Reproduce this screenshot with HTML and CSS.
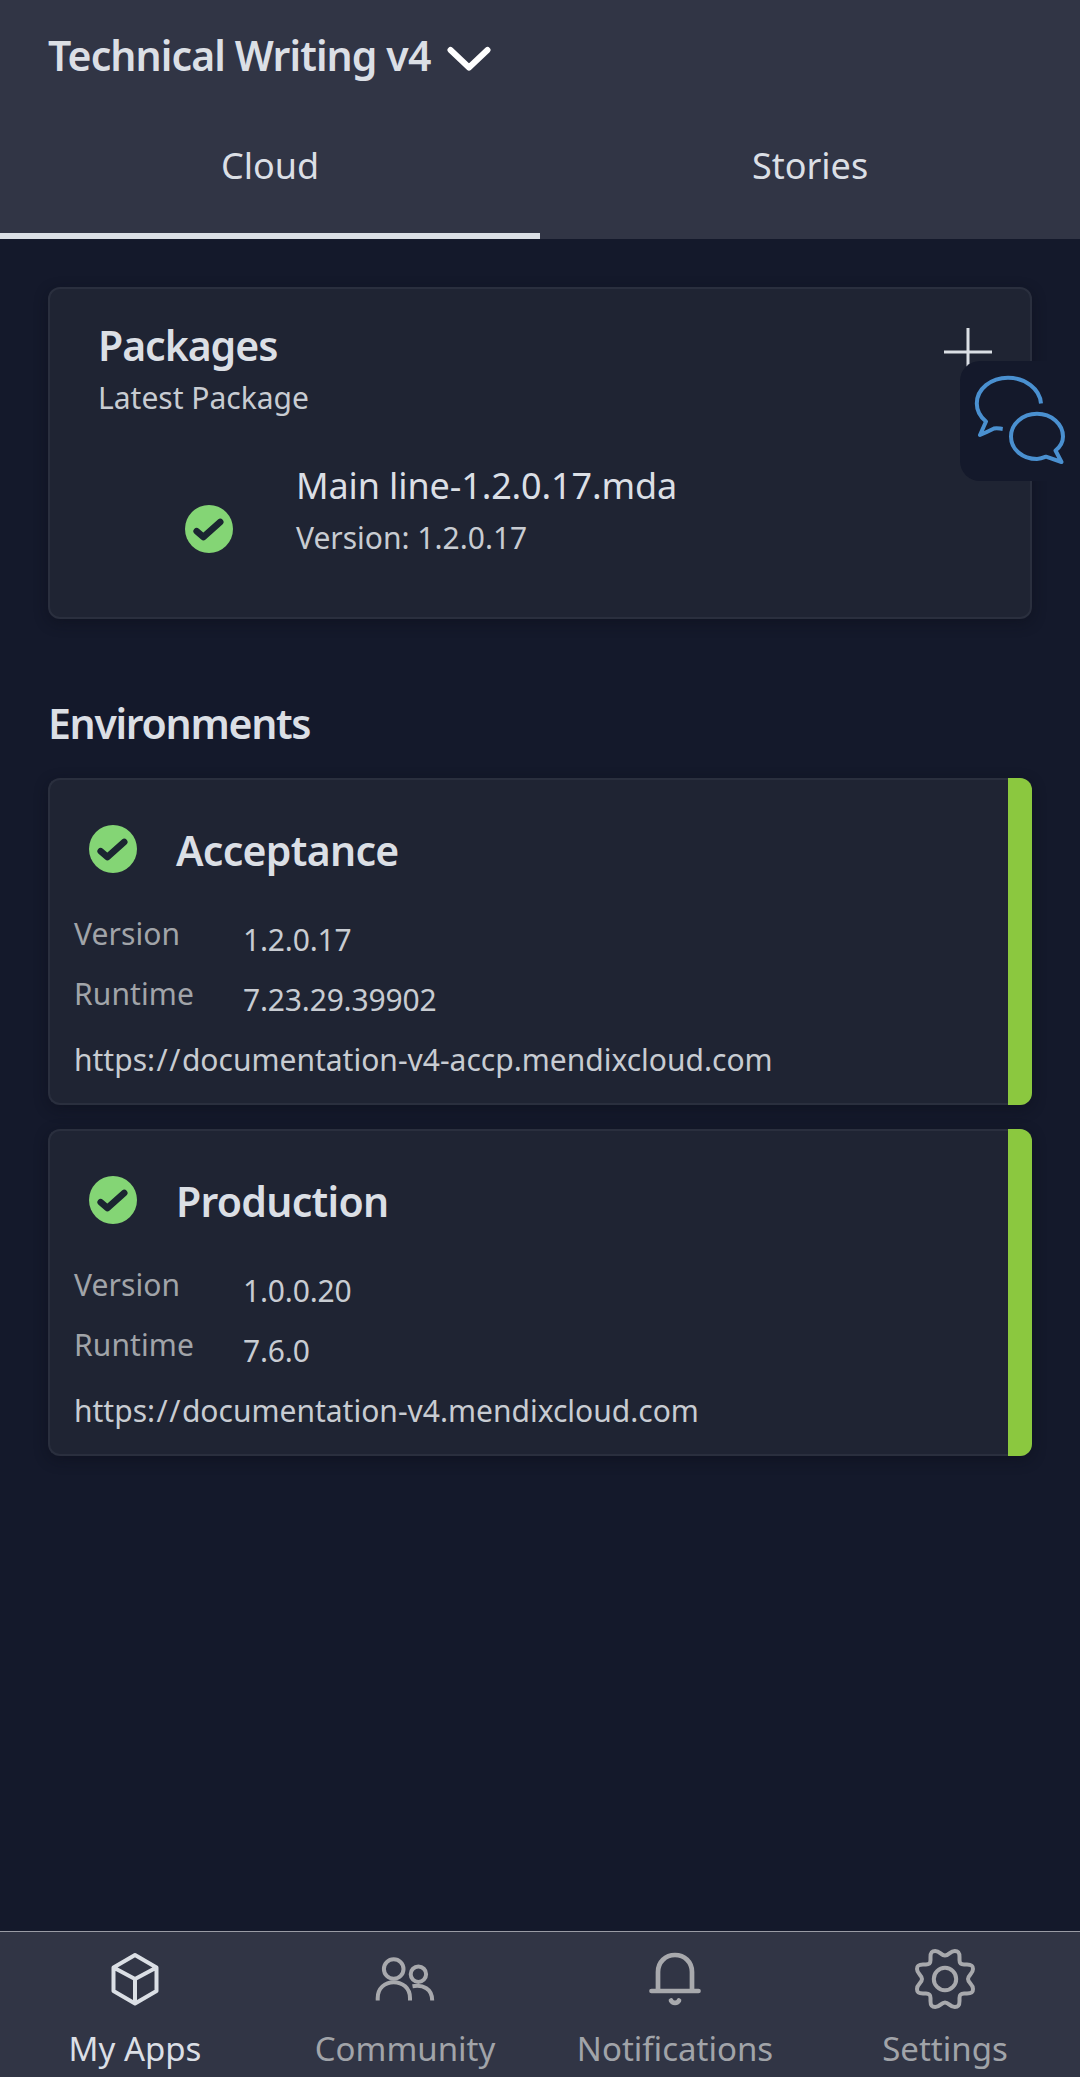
FILE: index.html
```html
<!DOCTYPE html>
<html lang="en">
<head>
<meta charset="utf-8">
<title>Technical Writing v4</title>
<link rel="stylesheet" href="styles.css">
</head>
<body>
<svg class="defs" aria-hidden="true">
  <symbol id="check" viewBox="-24 -24 48 48">
    <circle r="24" fill="#84d575"/>
    <path d="M-12.3 2.2L-5.6 8L11.2-7" fill="none" stroke="#1b2531" stroke-width="6.6" stroke-linecap="round" stroke-linejoin="round"/>
  </symbol>
</svg>
<div class="app">
  <header class="header">
    <div class="project">
      <h1 class="heading">Technical Writing v4</h1>
      <svg class="chevron" viewBox="0 0 44 26"><path d="M3.5 4L22 21.5L40.500 4"/></svg>
    </div>
    <nav class="tabs">
      <a class="tab tab-active">Cloud</a>
      <a class="tab">Stories</a>
    </nav>
  </header>

  <main class="content">
    <section class="card packages">
      <div class="packages-head">
        <div>
          <h2 class="heading">Packages</h2>
          <p class="text">Latest Package</p>
        </div>
        <svg class="plus" viewBox="0 0 48 48"><path d="M24 0V48M0 24H48"/></svg>
      </div>
      <div class="package">
        <svg class="check"><use href="#check"/></svg>
        <div>
          <p class="package-name">Main line-1.2.0.17.mda</p>
          <p class="text">Version: 1.2.0.17</p>
        </div>
      </div>
    </section>

    <h2 class="heading section-title">Environments</h2>
    <div class="environments">
      <section class="card environment">
        <div class="environment-head">
          <svg class="check"><use href="#check"/></svg>
          <h3 class="heading">Acceptance</h3>
        </div>
        <dl class="facts">
          <dt>Version</dt><dd>1.2.0.17</dd>
          <dt>Runtime</dt><dd>7.23.29.39902</dd>
        </dl>
        <p class="text">https<span class="scheme">://</span>documentation-v4-accp.mendixcloud.com</p>
      </section>
      <section class="card environment">
        <div class="environment-head">
          <svg class="check"><use href="#check"/></svg>
          <h3 class="heading">Production</h3>
        </div>
        <dl class="facts">
          <dt>Version</dt><dd>1.0.0.20</dd>
          <dt>Runtime</dt><dd>7.6.0</dd>
        </dl>
        <p class="text">https<span class="scheme">://</span>documentation-v4.mendixcloud.com</p>
      </section>
    </div>
  </main>

  <button class="chat" aria-label="Chat">
    <svg viewBox="0 0 92 90">
      <path d="M69 31.500C68 17 53 5.700 36 5.700C19 5.700 4.800 17 4.800 31.500C4.800 39 8.500 45 14 49.500L8 63C14 60.500 17 59 22 56.500C25 55.500 27 56.500 30.700 57"/>
      <path d="M65 41.700C50.500 41.700 39 52 39 64.500C39 77.500 50.500 87 65 87C68 87 71 86 74 84.700L89.500 90L83.500 78.500C88 75 91 70 91 64.500C91 52 79.500 41.700 65 41.700Z"/>
    </svg>
  </button>

  <nav class="bottom-bar">
    <a class="bar-item bar-item-active">
      <svg viewBox="-30 -30 60 60"><path d="M0-24L21.500-11.500V12L0 24.500L-21.500 12V-11.500ZM-21.500-11.500L0 0L21.500-11.500M0 0V24.500"/></svg>
      My Apps
    </a>
    <a class="bar-item">
      <svg viewBox="-30 -30 60 60"><circle cx="-11.300" cy="-10" r="9.800"/><circle cx="13.400" cy="-4.800" r="7.700"/><path d="M-27.300 21.500V19C-27.300 9-20 3.200-11.300 3.200C-2.500 3.200 5 9 5 19V21.500M7.500 7.300C18 5.500 27.200 9.500 27.200 21.500"/></svg>
      Community
    </a>
    <a class="bar-item">
      <svg viewBox="-30 -30 60 60"><path class="thick" d="M-17 12V-7C-17-17-9.500-24-0-24C9.500-24 17-17 17-7V12M-23.500 12H23.500M-4 21.500C-2.500 24.600 2.500 24.600 4 21.500"/></svg>
      Notifications
    </a>
    <a class="bar-item">
      <svg viewBox="-30 -30 60 60"><path d="M0-23.500C4-23.500 5-28 9.800-28C14-28 14.500-25.500 14.500-22V-19C14.500-15.500 16-14.500 19-14.500H22C26-14.500 28-14 28-10C28-5 23-4 23 0C23 4 28 5 28 10C28 14 26 14.500 22 14.500H19C16 14.500 14.500 15.500 14.500 19V22C14.500 25.500 14 28 9.800 28C5 28 4 23.500 0 23.500C-4 23.500-5 28-9.800 28C-14 28-14.500 25.500-14.500 22V19C-14.500 15.500-16 14.500-19 14.500H-22C-26 14.500-28 14-28 10C-28 5-23 4-23 0C-23-4-28-5-28-10C-28-14-26-14.500-22-14.500H-19C-16-14.500-14.500-15.500-14.500-19V-22C-14.500-25.500-14-28-9.800-28C-5-28-4-23.500 0-23.500Z"/><circle r="11.200"/></svg>
      Settings
    </a>
  </nav>
</div>
</body>
</html>
```
FILE: styles.css
```css
* { box-sizing: border-box; }

body {
  margin: 0;
  background: #14192b;
  color: #dbdfe5;
  font-family: "Noto Sans", sans-serif;
}

h1, h2, h3, p, dl, dd { margin: 0; }
svg { display: block; fill: none; flex: none; }
.defs { position: absolute; width: 0; height: 0; }

.app {
  position: relative;
  display: flex;
  flex-direction: column;
  height: 2077px;
}

.heading { font-size: 41px; line-height: 56px; font-weight: 600; letter-spacing: -.9px; white-space: nowrap; }
.text { font-size: 30px; line-height: 42px; color: #c8ccd2; white-space: nowrap; }
.check { width: 48px; height: 48px; }

/* Header */
.header { height: 239px; padding-top: 27px; background: #313545; }
.project { display: flex; align-items: center; gap: 17px; padding-left: 48px; }
.chevron { width: 44px; height: 26px; margin-top: 8px; stroke: #fff; stroke-width: 6; stroke-linecap: round; stroke-linejoin: round; }
.tabs { display: flex; height: 156px; }
.tab {
  flex: 1;
  padding-top: 58px;
  border-bottom: 6px solid transparent;
  font-size: 36px;
  line-height: 50px;
  text-align: center;
}
.tab-active { border-color: #dbdfe5; }

/* Cards */
.content { flex: 1; padding: 48px 48px 0; }
.card {
  position: relative;
  background: #1f2433;
  border: 2px solid #2a2f3e;
  border-radius: 12px;
  box-shadow: 0 4px 14px rgba(10, 14, 24, .45);
}
.packages { height: 332px; padding: 28px 38px 0 48px; }
.packages-head { display: flex; justify-content: space-between; }
.packages-head .heading { letter-spacing: -1.05px; }
.packages-head .text { margin-top: 4px; }
.plus { width: 48px; height: 48px; margin-top: 11px; stroke: #dbdfe5; stroke-width: 3; }
.package { display: flex; gap: 63px; padding: 42px 0 0 87px; }
.package .check { margin-top: 44px; }
.package-name { margin-bottom: 6px; font-size: 36px; line-height: 50px; letter-spacing: -.13px; }

.section-title { margin: 76px 0 27px; letter-spacing: -1.3px; }
.environments { display: flex; flex-direction: column; gap: 24px; }
.environment { height: 327px; padding: 42px 0 0 24px; border-right: 0; }
.environment::after {
  content: "";
  position: absolute;
  top: -2px;
  right: 0;
  bottom: -2px;
  width: 24px;
  border-radius: 0 12px 12px 0;
  background: #8bc83f;
}
.environment-head { display: flex; gap: 39px; padding-left: 15px; }
.environment-head .heading { letter-spacing: -.72px; }
.environment-head .check { margin-top: 3px; }
.facts {
  display: grid;
  grid-template-columns: 169px auto;
  row-gap: 18px;
  margin: 35px 0 24px;
  font-size: 30px;
  line-height: 42px;
}
.facts dt { color: #a1a4a9; letter-spacing: .1px; }
.facts dd { height: 42px; padding-top: 6px; color: #c8ccd2; letter-spacing: -.18px; }
.scheme { letter-spacing: 1.5px; }

/* Floating chat button */
.chat {
  position: absolute;
  top: 361px;
  right: 0;
  display: flex;
  align-items: flex-start;
  width: 120px;
  height: 120px;
  padding: 11px 0 0 12px;
  border: 0;
  border-radius: 20px 0 0 20px;
  background: #14192b;
}
.chat svg { width: 92px; height: 90px; overflow: visible; stroke: #4a90d0; stroke-width: 4; stroke-linejoin: round; }

/* Bottom bar */
.bottom-bar { display: flex; height: 146px; border-top: 1px solid #9a9ca5; background: #313545; }
.bar-item {
  flex: 1;
  display: flex;
  flex-direction: column;
  align-items: center;
  gap: 17px;
  padding-top: 17px;
  font-size: 33px;
  line-height: 46px;
  color: #a1a4a9;
}
.bar-item svg { width: 60px; height: 60px; stroke: #a8a9ad; stroke-width: 4; stroke-linejoin: round; }
.bar-item .thick { stroke-width: 4.700; stroke-linecap: round; }
.bar-item-active { color: #dbdfe5; }
.bar-item-active svg { stroke: #dbdfe5; }
```
